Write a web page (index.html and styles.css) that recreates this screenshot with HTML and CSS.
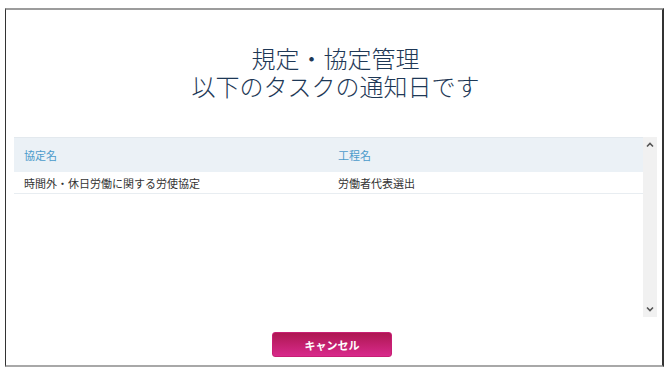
FILE: index.html
```html
<!DOCTYPE html>
<html lang="ja">
<head>
    <meta charset="UTF-8">
    <meta name="viewport" content="width=device-width, initial-scale=1.0">
    <title>規定・協定管理</title>
    <link rel="stylesheet" href="styles.css">
</head>
<body>
    <div class="dialog">
        <h1 class="dialog-title">規定・協定管理<br>以下のタスクの通知日です</h1>

        <div class="task-list">
            <div class="task-scroll">
                <table class="task-table">
                    <thead>
                        <tr>
                            <th class="col-agreement">協定名</th>
                            <th>工程名</th>
                        </tr>
                    </thead>
                    <tbody>
                        <tr>
                            <td>時間外・休日労働に関する労使協定</td>
                            <td>労働者代表選出</td>
                        </tr>
                    </tbody>
                </table>
            </div>
            <!-- scrollbar drawn by hand, headless browser hides the native one -->
            <div class="scrollbar">
                <svg class="scroll-arrow" width="8" height="6" viewBox="0 0 8 6">
                    <path d="M1 4.5 L4 1.5 L7 4.5" fill="none" stroke="#555" stroke-width="1.6"/>
                </svg>
                <svg class="scroll-arrow" width="8" height="6" viewBox="0 0 8 6">
                    <path d="M1 1.5 L4 4.5 L7 1.5" fill="none" stroke="#555" stroke-width="1.6"/>
                </svg>
            </div>
        </div>

        <div class="dialog-actions">
            <button type="button" class="cancel-btn">キャンセル</button>
        </div>
    </div>
</body>
</html>
```

FILE: styles.css
```css
body {
    margin: 0;
    padding: 8px 7px 7px 5px;
    background-color: #fff;
    font-family: "Noto Sans CJK JP", "Noto Sans", sans-serif;
    color: #333;
}

.dialog {
    height: 359px;
    box-sizing: border-box;
    border-top: 2px solid #9c9c9c;
    border-left: 1px solid #333;
    border-right: 2px solid #333;
    border-bottom: 2px solid #a8a8a8;
    padding: 0 5px 0 8px;
    display: flex;
    flex-direction: column;
}

.dialog-title {
    margin: 34px 0 0;
    font-size: 24px;
    font-weight: 300;
    line-height: 28px;
    text-align: center;
    color: #1e3856;
}

.task-list {
    margin-top: 37px;
    height: 180px;
    display: flex;
}

.task-scroll {
    flex: 1;
    overflow: hidden;
}

.scrollbar {
    width: 14px;
    background-color: #f1f1f1;
    display: flex;
    flex-direction: column;
    justify-content: space-between;
    align-items: center;
    padding: 5px 0;
    box-sizing: border-box;
}

.scroll-arrow {
    display: block;
}

.task-table {
    width: 100%;
    border-collapse: collapse;
    font-size: 11px;
}

.task-table th {
    background-color: #ebf1f6;
    color: #4b9bcb;
    font-weight: 400;
    text-align: left;
    height: 34px;
    padding: 0 10px;
    border-top: 1px solid #e3e9ee;
}

.task-table th.col-agreement {
    width: 294px;
}

.task-table td {
    height: 21px;
    padding: 0 10px;
    border-bottom: 1px solid #e8edf1;
    color: #333;
}

.dialog-actions {
    display: flex;
    justify-content: center;
    margin-top: 15px;
}

.cancel-btn {
    width: 120px;
    height: 25px;
    margin-right: 7px;
    border: 1px solid #c81f74;
    border-radius: 3px;
    background: linear-gradient(#ae1752, #d82a8b);
    color: #fff;
    font-family: "Noto Sans CJK JP", sans-serif;
    font-size: 11px;
    font-weight: 700;
    cursor: pointer;
}
```
